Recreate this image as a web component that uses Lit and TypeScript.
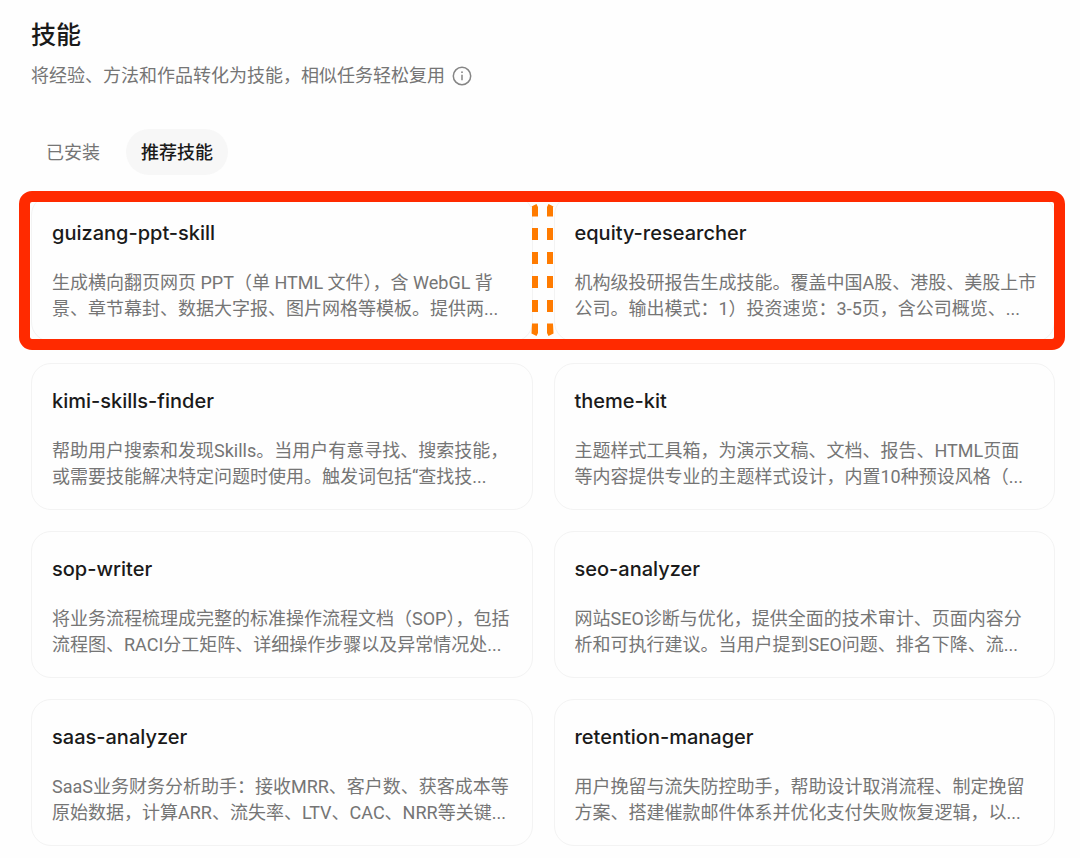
import { LitElement, html, css, svg } from "lit";
import { customElement, property, state } from "lit/decorators.js";

interface Skill {
  name: string;
  lines: string[];
}

const ROWS: Skill[][] = [
  [
    {
      name: "guizang-ppt-skill",
      lines: ["生成横向翻页网页 PPT（单 HTML 文件），含 WebGL 背", "景、章节幕封、数据大字报、图片网格等模板。提供两..."],
    },
    {
      name: "equity-researcher",
      lines: ["机构级投研报告生成技能。覆盖中国A股、港股、美股上市", "公司。输出模式：1）投资速览：3-5页，含公司概览、..."],
    },
  ],
  [
    {
      name: "kimi-skills-finder",
      lines: ["帮助用户搜索和发现Skills。当用户有意寻找、搜索技能，", "或需要技能解决特定问题时使用。触发词包括“查找技..."],
    },
    {
      name: "theme-kit",
      lines: ["主题样式工具箱，为演示文稿、文档、报告、HTML页面", "等内容提供专业的主题样式设计，内置10种预设风格（..."],
    },
  ],
  [
    {
      name: "sop-writer",
      lines: ["将业务流程梳理成完整的标准操作流程文档（SOP），包括", "流程图、RACI分工矩阵、详细操作步骤以及异常情况处..."],
    },
    {
      name: "seo-analyzer",
      lines: ["网站SEO诊断与优化，提供全面的技术审计、页面内容分", "析和可执行建议。当用户提到SEO问题、排名下降、流..."],
    },
  ],
  [
    {
      name: "saas-analyzer",
      lines: ["SaaS业务财务分析助手：接收MRR、客户数、获客成本等", "原始数据，计算ARR、流失率、LTV、CAC、NRR等关键..."],
    },
    {
      name: "retention-manager",
      lines: ["用户挽留与流失防控助手，帮助设计取消流程、制定挽留", "方案、搭建催款邮件体系并优化支付失败恢复逻辑，以..."],
    },
  ],
];

@customElement("skill-card")
export class SkillCard extends LitElement {
  @property({ attribute: false }) skill!: Skill;

  static styles = css`
    :host {
      display: block;
      min-width: 0;
    }
    .card {
      box-sizing: border-box;
      padding: 22px 8px 19px 20px;
      border: 1px solid #f3f3f3;
      border-radius: 20px;
      overflow: hidden;
    }
    .name {
      margin: 0 0 22px;
      font-size: 20px;
      font-weight: 500;
      line-height: 30px;
      color: #1a1a1a;
    }
    .desc {
      margin: 0;
      font-family: Roboto, "Noto Sans CJK SC", sans-serif;
      font-size: 18px;
      line-height: 26px;
      color: #757575;
    }
    .line {
      display: block;
      white-space: nowrap;
    }
  `;

  render() {
    return html`
      <article class="card">
        <h2 class="name">${this.skill.name}</h2>
        <p class="desc">${this.skill.lines.map((l) => html`<span class="line">${l}</span>`)}</p>
      </article>
    `;
  }
}

@customElement("app-root")
export class AppRoot extends LitElement {
  @state() private active = 1;

  static styles = css`
    :host {
      display: block;
      min-height: 100vh;
      box-sizing: border-box;
      padding: 16px 25px 12px 31px;
      background: #fefefe;
      font-family: Inter, "Noto Sans CJK SC", sans-serif;
      color: #1a1a1a;
    }
    .title {
      margin: 0;
      font-size: 25px;
      font-weight: 500;
      line-height: 38px;
    }
    .sub {
      display: flex;
      align-items: center;
      gap: 7px;
      margin: 8px 0 39px;
      font-size: 18px;
      line-height: 28px;
      color: #757575;
    }
    .info {
      display: flex;
      padding: 0;
      border: 0;
      background: none;
      color: #858585;
    }
    .tabs {
      display: flex;
      gap: 11px;
      margin-bottom: 20px;
    }
    .tab {
      padding: 11px 15px 9px;
      border: 0;
      border-radius: 23px;
      background: none;
      font: inherit;
      font-size: 18px;
      line-height: 26px;
      color: #757575;
    }
    .tab.active {
      background: #f7f7f7;
      font-weight: 500;
      color: #1a1a1a;
    }
    .rows {
      display: grid;
      gap: 21px;
    }
    .row {
      position: relative;
      display: grid;
      grid-template-columns: 1fr 1fr;
      gap: 21px;
    }
    .marked::after {
      content: "";
      position: absolute;
      inset: -4px -10px -8px -12px;
      border: 11px solid #ff2a00;
      border-radius: 13px;
      pointer-events: none;
    }
    .dashes {
      position: absolute;
      top: 9px;
      left: 50%;
      margin-left: -12px;
    }
  `;

  private dashes() {
    const middle = [24, 48, 72, 96];
    return html`
      <svg class="dashes" width="23" height="132" viewBox="0 0 23 132" fill="#ff7b00" aria-hidden="true">
        <path d="M0.500 2.500L5.500 0L7 3V12.500H1V3Z M22.500 2.500L17.500 0L16 3V12.500H22V3Z" />
        ${middle.map((y) => svg`<path d=${`M1 ${y}h6v12h-6z M16 ${y}h6v12h-6z`} />`)}
        <path d="M1 119.500H7V129L5.500 132L0.500 129.500Z M22 119.500H16V129L17.500 132L22.500 129.500Z" />
      </svg>
    `;
  }

  render() {
    return html`
      <h1 class="title">技能</h1>
      <div class="sub">
        <span>将经验、方法和作品转化为技能，相似任务轻松复用</span>
        <button class="info" aria-label="说明">
          <svg width="20" height="20" viewBox="0 0 20 20" fill="none" stroke="currentColor" stroke-width="1.5">
            <circle cx="10" cy="10" r="8.700" />
            <path d="M10 8.700V14.200" />
            <circle cx="10" cy="6.200" r="0.900" fill="currentColor" stroke="none" />
          </svg>
        </button>
      </div>
      <div class="tabs" role="tablist">
        ${["已安装", "推荐技能"].map(
          (t, i) => html`<button
            class="tab ${this.active === i ? "active" : ""}"
            role="tab"
            aria-selected=${this.active === i}
            @click=${() => (this.active = i)}
          >${t}</button>`
        )}
      </div>
      <main class="rows">
        ${ROWS.map(
          (row, i) => html`<section class="row ${i === 0 ? "marked" : ""}">
            ${row.map((s) => html`<skill-card .skill=${s}></skill-card>`)}
            ${i === 0 ? this.dashes() : null}
          </section>`
        )}
      </main>
    `;
  }
}
